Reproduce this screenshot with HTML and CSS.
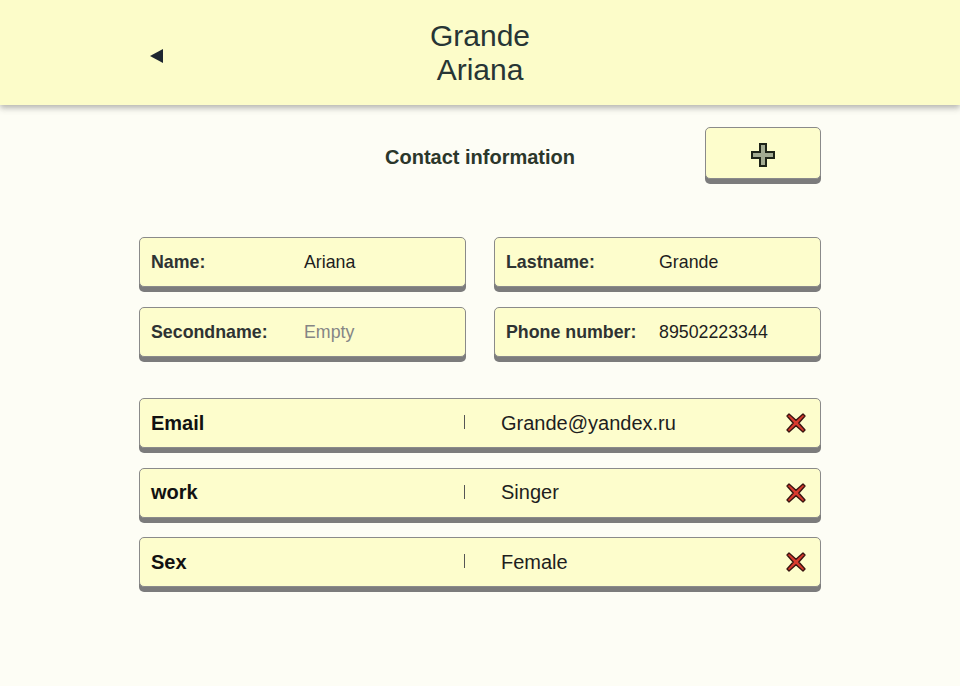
FILE: index.html
```html
<!DOCTYPE html>
<html>
<head>
<meta charset="utf-8">
<link rel="stylesheet" href="styles.css">
</head>
<body>
<header class="topbar">
  <div class="topbar-inner">
    <button class="back" aria-label="Back">
      <svg width="14" height="14" viewBox="0 0 14 14"><polygon points="13,0 13,14 0,7" fill="#1d2630"/></svg>
    </button>
    <h1 class="title">Grande<br>Ariana</h1>
    <span class="spacer"></span>
  </div>
</header>
<main class="content">
  <div class="section-head">
    <span></span>
    <h2 class="section-title">Contact information</h2>
    <button class="add-btn" aria-label="Add">
      <svg width="26" height="26" viewBox="0 0 26 26"><path d="M10 2 H16 V10 H24 V16 H16 V24 H10 V16 H2 V10 H10 Z" fill="#a3ab92" stroke="#1e2418" stroke-width="2" stroke-linejoin="miter"/></svg>
    </button>
  </div>
  <div class="fields">
    <div class="card"><span class="card-label">Name:</span><span class="card-value">Ariana</span></div>
    <div class="card"><span class="card-label">Lastname:</span><span class="card-value">Grande</span></div>
    <div class="card"><span class="card-label">Secondname:</span><span class="card-value empty">Empty</span></div>
    <div class="card"><span class="card-label">Phone number:</span><span class="card-value">89502223344</span></div>
  </div>
  <div class="rows">
    <div class="row"><span class="row-label">Email</span><span class="sep"></span><span class="row-value">Grande@yandex.ru</span><button class="del" aria-label="Delete"><svg width="22" height="22" viewBox="0 0 22 22"><path d="M4 2 L11 8.2 L18 2 L20 4 L13.8 11 L20 18 L18 20 L11 13.8 L4 20 L2 18 L8.2 11 L2 4 Z" fill="#d93a2e" stroke="#3a1410" stroke-width="1.4" stroke-linejoin="round"/></svg></button></div>
    <div class="row"><span class="row-label">work</span><span class="sep"></span><span class="row-value">Singer</span><button class="del" aria-label="Delete"><svg width="22" height="22" viewBox="0 0 22 22"><path d="M4 2 L11 8.2 L18 2 L20 4 L13.8 11 L20 18 L18 20 L11 13.8 L4 20 L2 18 L8.2 11 L2 4 Z" fill="#d93a2e" stroke="#3a1410" stroke-width="1.4" stroke-linejoin="round"/></svg></button></div>
    <div class="row"><span class="row-label">Sex</span><span class="sep"></span><span class="row-value">Female</span><button class="del" aria-label="Delete"><svg width="22" height="22" viewBox="0 0 22 22"><path d="M4 2 L11 8.2 L18 2 L20 4 L13.8 11 L20 18 L18 20 L11 13.8 L4 20 L2 18 L8.2 11 L2 4 Z" fill="#d93a2e" stroke="#3a1410" stroke-width="1.4" stroke-linejoin="round"/></svg></button></div>
  </div>
</main>
</body>
</html>
```
FILE: styles.css
```css
* { box-sizing: border-box; }
html, body { margin: 0; padding: 0; }
body {
  background: #fdfdf5;
  font-family: "Liberation Sans", Arial, sans-serif;
  color: #222;
  width: 960px;
  height: 686px;
  overflow: hidden;
}
.topbar {
  height: 105px;
  background: #fcfcc9;
  box-shadow: 0 3px 6px rgba(90, 90, 90, 0.45);
  position: relative;
}
.topbar-inner {
  width: 682px;
  margin: 0 auto;
  height: 100%;
  display: grid;
  grid-template-columns: 1fr auto 1fr;
  align-items: center;
}
.back {
  justify-self: start;
  margin-left: 11px;
  margin-top: 7px;
  background: none;
  border: 0;
  padding: 0;
  width: 14px;
  height: 14px;
  display: flex;
}
.title {
  margin: 0;
  font-weight: normal;
  font-size: 30px;
  line-height: 34px;
  text-align: center;
  color: #273535;
}
.content {
  width: 682px;
  margin: 22px auto 0;
}
.section-head {
  display: grid;
  grid-template-columns: 1fr auto 1fr;
  align-items: center;
  height: 52px;
}
.section-title {
  margin: 8px 0 0;
  font-size: 20px;
  font-weight: bold;
  color: #2b372b;
}
.add-btn {
  justify-self: end;
  width: 116px;
  height: 52px;
  background: #fdfdcc;
  border: 1px solid #8a8a8a;
  border-radius: 5px;
  box-shadow: 0 5px 0 #7c7c7c;
  display: flex;
  align-items: center;
  justify-content: center;
  padding: 4px 0 0;
}
.fields {
  margin-top: 58px;
  display: grid;
  grid-template-columns: 1fr 1fr;
  column-gap: 28px;
  row-gap: 20px;
}
.card {
  height: 50px;
  background: #fdfdcc;
  border: 1px solid #8a8a8a;
  border-radius: 5px;
  box-shadow: 0 5px 0 #7c7c7c;
  display: flex;
  align-items: center;
  padding-left: 11px;
  font-size: 17.8px;
}
.card-label {
  width: 153px;
  font-weight: bold;
  color: #2e3333;
}
.card-value { color: #1e1e1e; }
.card-value.empty { color: #858585; }
.rows {
  margin-top: 41px;
  display: flex;
  flex-direction: column;
  gap: 19.5px;
}
.row {
  height: 50px;
  background: #fdfdcc;
  border: 1px solid #8a8a8a;
  border-radius: 5px;
  box-shadow: 0 5px 0 #7c7c7c;
  display: flex;
  align-items: center;
  padding: 0 13px 0 11px;
  font-size: 20px;
}
.row-label {
  width: 313px;
  font-weight: bold;
  color: #111;
}
.sep {
  width: 1px;
  height: 14px;
  background: #555;
  margin-top: -2px;
}
.row-value {
  margin-left: 36px;
  flex: 1;
  color: #1e1e1e;
}
.del {
  background: none;
  border: 0;
  padding: 0;
  width: 22px;
  height: 22px;
  display: flex;
}
```
